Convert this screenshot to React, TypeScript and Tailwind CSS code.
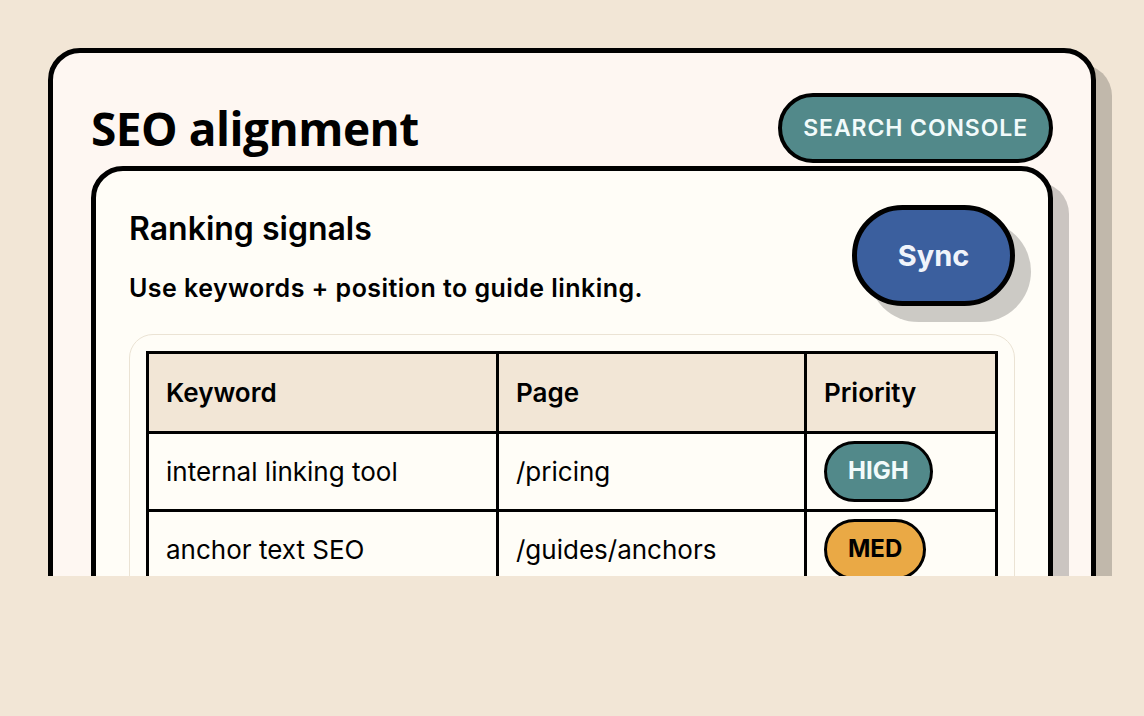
const rows = [
  { keyword: "internal linking tool", page: "/pricing", priority: "HIGH" },
  { keyword: "anchor text SEO", page: "/guides/anchors", priority: "MED" },
  { keyword: "topic clusters", page: "/blog/clusters", priority: "LOW" },
];

function Pill({ level }: { level: string }) {
  const tone =
    level === "HIGH"
      ? "bg-[#52898a] text-[#f2fbfb]"
      : level === "MED"
      ? "bg-[#eaa945] text-black"
      : "bg-[#d9d2c4] text-black";
  return (
    <span
      className={`inline-flex h-[61px] items-center rounded-full border-[3px] border-black px-[21px] text-[24px] font-bold ${tone}`}
    >
      {level}
    </span>
  );
}

export default function App() {
  return (
    <div className="min-h-screen bg-[#f2e6d6] font-['Inter',_sans-serif] text-black">
      <div className="h-[576px] overflow-hidden p-12">
        <div className="rounded-[32px] border-[5px] border-black bg-[#fef7f2] px-[38px] pt-[40px] pb-10 shadow-[16px_16px_0_rgba(0,0,0,0.2)]">
          <div className="mb-[3px] flex items-center justify-between">
            <h1 className="font-['Open_Sans',_sans-serif] text-[46px] font-bold tracking-[-0.5px]">SEO alignment</h1>
            <button className="h-[70px] rounded-full border-4 border-black bg-[#52898a] px-[21px] text-[23px] font-semibold tracking-[0.9px] text-[#f2fbfb]">
              SEARCH CONSOLE
            </button>
          </div>

          <div className="rounded-[32px] border-[5px] border-black bg-[#fffdf7] px-[33px] pt-[34px] pb-8 shadow-[16px_16px_0_rgba(0,0,0,0.2)]">
            <div className="flex items-start justify-between">
              <div className="pt-[6px]">
                <h2 className="text-[32px] font-semibold leading-9">Ranking signals</h2>
                <p className="mt-[23px] text-[25px] font-semibold tracking-[0.45px]">Use keywords + position to guide linking.</p>
              </div>
              <button className="h-[101px] w-[163px] rounded-full border-[5px] border-black bg-[#3b5f9e] text-[29px] font-bold text-[#f0f4fb] shadow-[16px_16px_0_rgba(0,0,0,0.2)]">
                Sync
              </button>
            </div>

            <div className="mt-[26px] rounded-[24px] border border-[#ebe3d4] p-4">
              <table className="w-full table-fixed border-collapse border-[3px] border-black text-left text-[26px]">
                <colgroup>
                  <col className="w-[350px]" />
                  <col className="w-[308px]" />
                  <col />
                </colgroup>
                <thead>
                  <tr className="h-[80px] bg-[#f2e6d6]">
                    <th className="border-[3px] border-black px-[17px] font-semibold">Keyword</th>
                    <th className="border-[3px] border-black px-[17px] font-semibold">Page</th>
                    <th className="border-[3px] border-black px-[17px] font-semibold">Priority</th>
                  </tr>
                </thead>
                <tbody>
                  {rows.map((r) => (
                    <tr key={r.keyword} className="h-[78px]">
                      <td className="border-[3px] border-black px-[17px]">{r.keyword}</td>
                      <td className="border-[3px] border-black px-[17px]">{r.page}</td>
                      <td className="border-[3px] border-black px-[17px]">
                        <Pill level={r.priority} />
                      </td>
                    </tr>
                  ))}
                </tbody>
              </table>
            </div>
          </div>
        </div>
      </div>
    </div>
  );
}
